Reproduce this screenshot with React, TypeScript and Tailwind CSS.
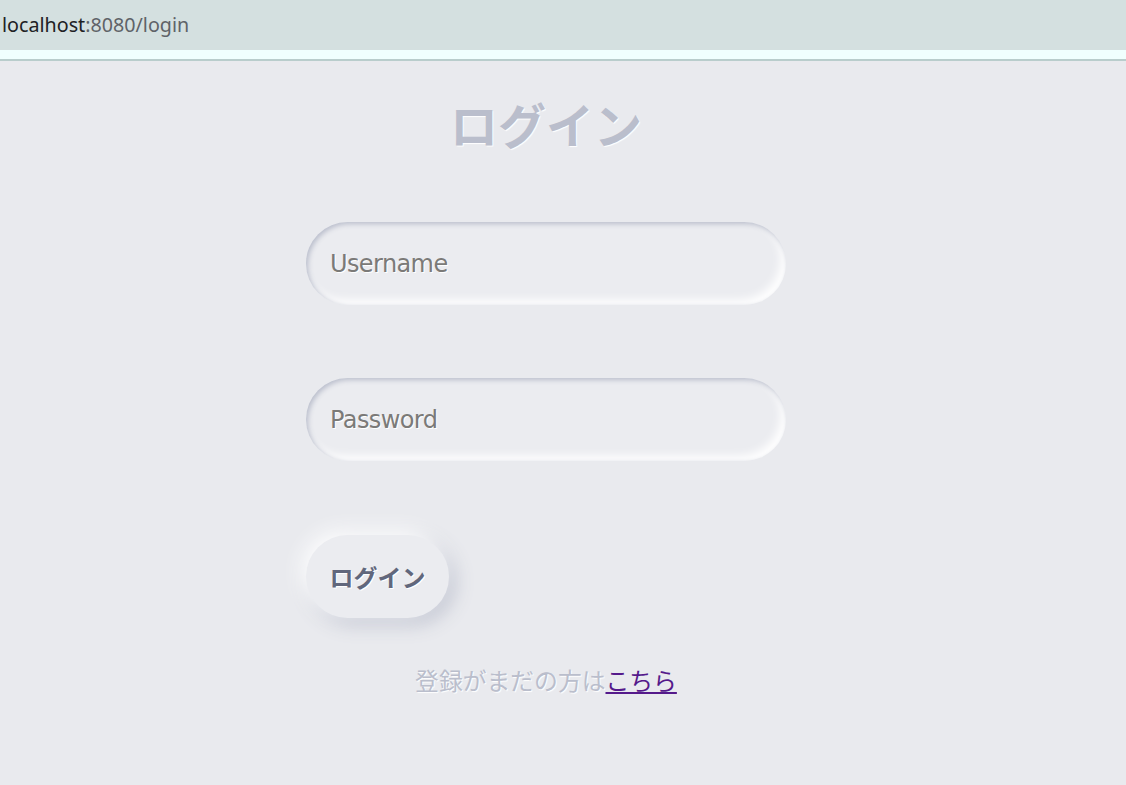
import { useState } from 'react';

const field =
  "w-[480px] h-[83px] rounded-full bg-[#ebecf0] px-[24px] text-[24px] tracking-[-0.6px] text-[#61677c] placeholder:text-[#7b7a78] outline-none [text-shadow:1px_1px_0_#fff] shadow-[inset_2px_2px_5px_#babecc,inset_-5px_-5px_10px_#ffffff] [font-family:'DejaVu_Sans','Noto_Sans_CJK_JP',sans-serif]";

export default function App() {
  const [username, setUsername] = useState('');
  const [password, setPassword] = useState('');

  return (
    <div className="min-h-screen w-full bg-[#e9eaee]">
      {/* address bar */}
      <div className="h-[50px] bg-[#d4e0e0] flex items-center pl-[2px] text-[19.7px] [font-family:'Noto_Sans',sans-serif]">
        <span className="text-[#202124]">localhost</span>
        <span className="text-[#5f6368]">:8080/login</span>
      </div>
      <div className="h-[9px] bg-[#f0fffe]" />
      <div className="h-[2px] bg-[#b9cdcc]" />

      <div className="flex justify-center pr-[34px]">
        <div className="w-[480px] flex flex-col items-center">
          <h1 className="mt-[38px] mb-[75px] text-[48px] leading-none font-bold text-[#babecc] [text-shadow:1px_1px_1px_#fff] [font-family:'Noto_Sans_CJK_JP',sans-serif]">
            ログイン
          </h1>

          <input
            type="text"
            value={username}
            onChange={(e) => setUsername(e.target.value)}
            placeholder="Username"
            className={field}
          />

          <input
            type="password"
            value={password}
            onChange={(e) => setPassword(e.target.value)}
            placeholder="Password"
            className={`mt-[73px] ${field}`}
          />

          <div className="self-stretch mt-[74px]">
            <button className="w-[143px] h-[83px] rounded-full bg-[#ebecf0] text-[24px] font-bold text-[#61677c] [text-shadow:1px_1px_0_#fff] shadow-[-5px_-5px_20px_#ffffff,5px_5px_20px_#babecc] [font-family:'Noto_Sans_CJK_JP',sans-serif]">
              ログイン
            </button>
          </div>

          <p className="mt-[46px] text-[23.8px] leading-[32px] text-[#babecc] [text-shadow:1px_1px_1px_#fff] [font-family:'Noto_Sans_CJK_JP',sans-serif]">
            登録がまだの方は
            <a href="#" className="text-[#551a8b] underline [text-shadow:none]">
              こちら
            </a>
          </p>
        </div>
      </div>
    </div>
  );
}
